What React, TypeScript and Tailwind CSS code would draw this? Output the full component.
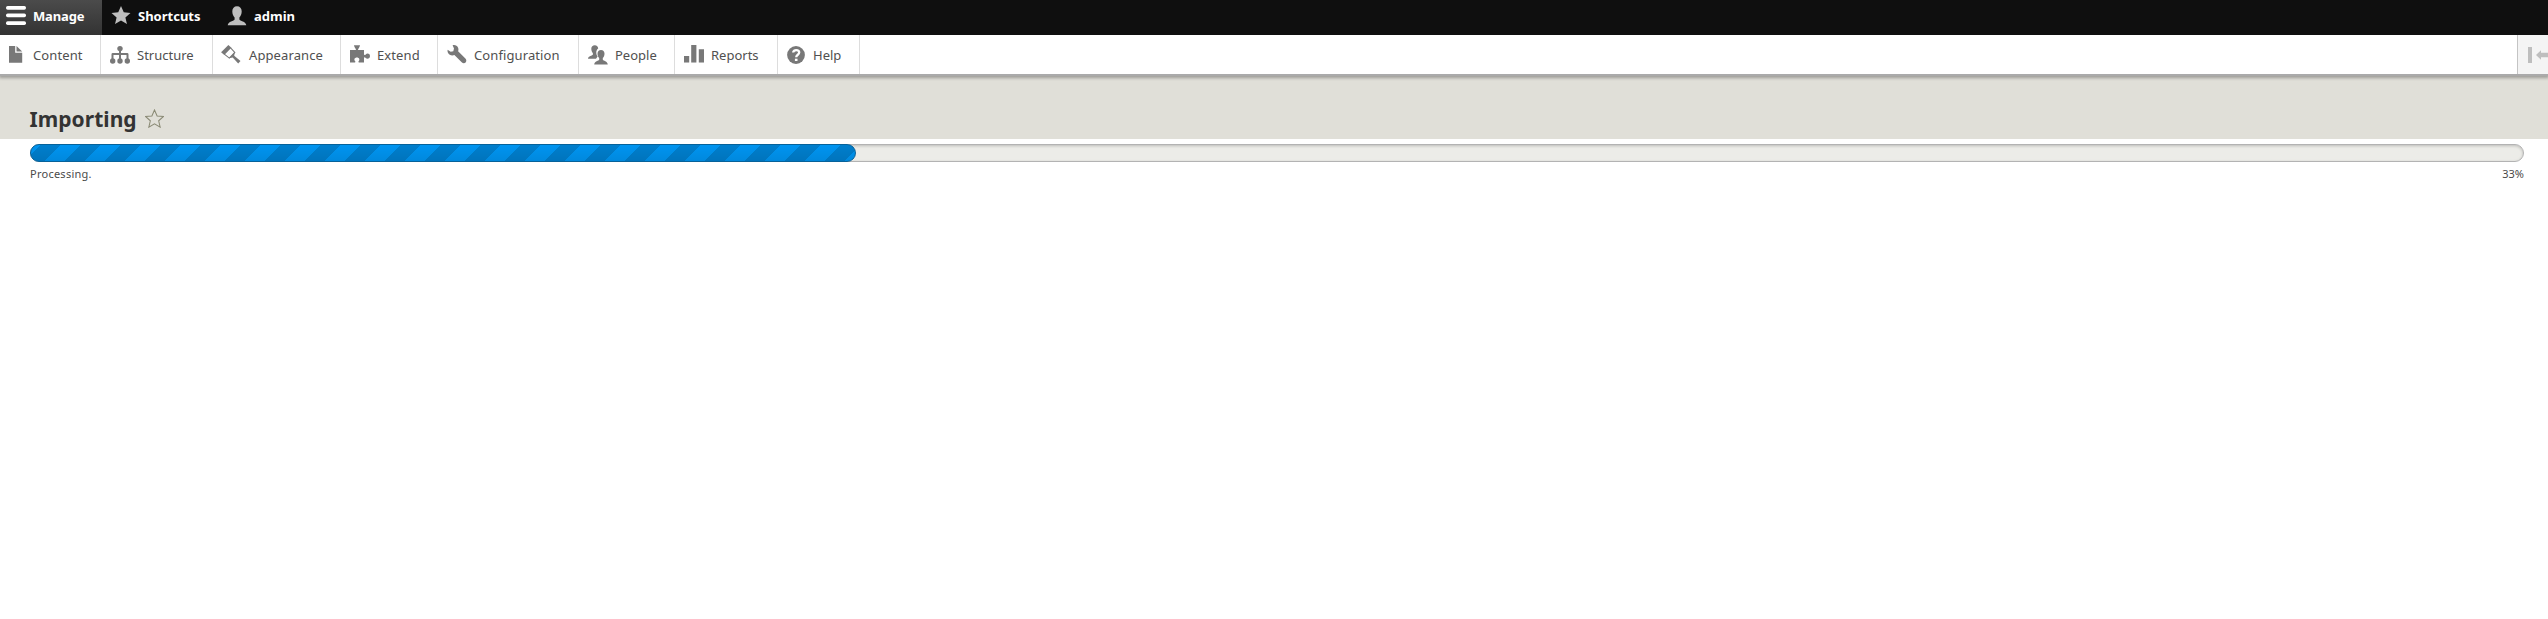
import type { ReactNode } from 'react';

const STAR = 'M10 1l2.75 6.3 6.75.6-5.1 4.5 1.55 6.7L10 15.6l-5.95 3.5 1.55-6.7L.5 7.9l6.75-.6z';
const PERSON =
  'M10 0.2c2.9 0 4.7 2 4.7 5 0 2.6-.9 5-2.3 6.2v2.2c.3 1.3 6.6 2 6.9 5.6H.7c.3-3.6 6.6-4.3 6.9-5.6v-2.2C6.2 10.2 5.300 7.8 5.300 5.200c0-3 1.800-5 4.700-5z';

function Icon({ children, className }: { children: ReactNode; className: string }) {
  return (
    <svg viewBox="0 0 20 20" fill="currentColor" className={`size-5 shrink-0 overflow-visible ${className}`}>
      {children}
    </svg>
  );
}

const icons: Record<string, ReactNode> = {
  Content: <path d="M3 1h6.200v6.800h7v10H3zM10.500 1l5.700 5.500h-5.700z" />,
  Structure: (
    <>
      <path d="M9 3h2v5h6.200q1.300 0 1.300 1.300V15h-2v-5H11v5H9v-5H3.500v5h-2V9.300Q1.500 8 2.800 8H9z" />
      <circle cx="10" cy="3.600" r="2.700" />
      <circle cx="2.700" cy="16" r="2.700" />
      <circle cx="10" cy="16" r="2.700" />
      <circle cx="17.300" cy="16" r="2.700" />
    </>
  ),
  Appearance: (
    <>
      <path d="M.1 7.200L7.400 0l3 2.800-7.100 7.100z" />
      <path d="M9.600 2.800l4.200 4.700-5.500 5.600-5-4" fill="none" stroke="currentColor" strokeWidth="1.100" />
      <path d="M13.800 7.200l-.6 3.500 6.300 5.400-2.300 2.500-5.500-6.200-3.600.9z" />
    </>
  ),
  Extend: (
    <path d="M0 5h5.400c.7 0 .7-1 0-1.600C4.500 2.600 4 .2 4 .2h6s-.5 2.400-1.400 3.200c-.7.600-.7 1.600 0 1.600H14v4.300c0 .8 1 .9 1.700.1C17 8 20 8.400 20 11.100s-3 3.200-4.300 1.800c-.7-.8-1.700-.7-1.700.100v4.600H9c-.7 0-.8-.8-.2-1.500 1.200-1.300.6-3.600-1.900-3.600s-3.100 2.300-1.900 3.600c.6.700.5 1.500-.2 1.500H0z" />
  ),
  Configuration: (
    <path d="M5.600.3c2.300-.7 4.600.300 5.500 2.400.5 1.200.4 2.400 0 3.500l7.300 7.400c1.200 1.200 1.200 2.900.2 3.900-1 1-2.700 1-3.900-.2L7.400 10c-1.500.7-3.200.6-4.700-.300C1 8.600.200 6.700.600 4.800l3.100 2 2.600-.6.700-2.600z" />
  ),
  People: (
    <>
      <path d="M6.800.2c2 0 3.400 1.300 3.400 3.300-1.400 1-2 2.500-1.900 4.500.1 1.400.6 2.700 1.300 3.600L8 13.700H0c.2-2.700 4.500-3 4.900-4.200V8.200C4 7.300 3.300 5.600 3.300 3.800c0-2.200 1.400-3.600 3.500-3.600z" />
      <path d="M13 5c2.200 0 3.500 1.500 3.500 3.700 0 1.900-.7 3.500-1.700 4.400v1.600c.3 1 4.800 1.500 5 4.900H6.200c.2-3.400 4.700-3.900 5-4.900v-1.600c-1-.9-1.700-2.500-1.700-4.400C9.500 6.500 10.800 5 13 5z" />
    </>
  ),
  Reports: (
    <>
      <path d="M0 11h5.200v6H0zM7.200 0h5.200v17H7.200zM14.800 4.300H20V17h-5.200z" />
      <path d="M0 17h5.200v.8H0zM7.200 17h5.200v.8H7.200zM14.800 17H20v.8h-5.200z" fillOpacity=".7" />
    </>
  ),
  Help: (
    <>
      <circle cx="9" cy="10" r="8.900" />
      <path d="M6.200 7.600c0-3.400 6-3.300 6 0 0 2.200-3 2.100-3 4.700" fill="none" stroke="#fff" strokeWidth="2.300" />
      <rect x="7.900" y="13.700" width="2.600" height="2.300" fill="#fff" />
    </>
  ),
};

const menu = [
  { label: 'Content', box: 'w-[101px] pl-1.5', gap: 'gap-[7px] tracking-[0.1px]' },
  { label: 'Structure', box: 'w-[112px] pl-[9px]', gap: 'gap-[7px]' },
  { label: 'Appearance', box: 'w-32 pl-2', gap: 'gap-2 tracking-[0.1px]' },
  { label: 'Extend', box: 'w-[97px] pl-[9px]', gap: 'gap-[7px] tracking-[0.1px]' },
  { label: 'Configuration', box: 'w-[141px] pl-[9px]', gap: 'gap-[7px] tracking-[0.1px]' },
  { label: 'People', box: 'w-24 pl-[9px]', gap: 'gap-[7px]' },
  { label: 'Reports', box: 'w-[103px] pl-[9px]', gap: 'gap-[7px]' },
  { label: 'Help', box: 'w-[82px] pl-[9px]', gap: 'gap-1.5' },
];

function Toolbar() {
  return (
    <nav className="flex h-[35px] items-start bg-[#0f0f0f] text-[13px] leading-8 font-bold text-white">
      <a className="flex h-full w-[102px] items-start gap-[7px] bg-linear-to-b from-[#4b4b4b] to-[#333] pl-1.5 tracking-[-0.15px]">
        <Icon className="mt-[5px] text-white">
          <rect y="1" width="20" height="3.700" rx="1.700" />
          <rect y="8.600" width="20" height="3.700" rx="1.700" />
          <rect y="16.200" width="20" height="3.700" rx="1.700" />
        </Icon>
        Manage
      </a>
      <a className="flex w-[117px] items-start gap-[7px] pl-[9px]">
        <Icon className="mt-[5px] text-[#bebebe]">
          <path d={STAR} />
        </Icon>
        Shortcuts
      </a>
      <a className="flex items-start gap-[7px] pl-2">
        <Icon className="mt-1.5 text-[#bebebe]">
          <path d={PERSON} />
        </Icon>
        admin
      </a>
    </nav>
  );
}

function Tray() {
  return (
    <nav className="relative flex h-[39px] bg-white text-[13px] leading-10 text-[#505050] shadow-[0_2px_0_0_#aaa,0_3px_3px_1px_rgba(0,0,0,0.3)] [clip-path:inset(0_0_-10px_0)]">
      {menu.map(({ label, box, gap }) => (
        <a key={label} className={`flex shrink-0 border-r border-[#ddd] ${box} ${gap}`}>
          <Icon className="mt-2.5 text-[#787878]">{icons[label]}</Icon>
          {label}
        </a>
      ))}
      <button className="ml-auto flex w-[31px] items-center overflow-hidden border-l border-[#c4c4c4] bg-[#f4f4f4] pl-2.5">
        <Icon className="mt-px text-[#bebebe]">
          <path d="M0 2h4v16H0zM8 10l5-4.800v2.500h7v4.600h-7v2.500z" />
        </Icon>
      </button>
    </nav>
  );
}

function Progress() {
  return (
    <div className="pt-[5px] pr-6 pl-[30px] text-[11px] text-[#4a4a4a]">
      <div className="h-[18px] rounded-full border border-[#b3b3b3] bg-[#ecece8] shadow-[inset_0_1px_3px_rgba(0,0,0,0.2)]">
        <div className="-mt-px -ml-px h-[18px] w-[826px] rounded-full border border-[#07629a] bg-[linear-gradient(to_bottom,transparent,rgba(0,0,0,0.08)),repeating-linear-gradient(135deg,#0094f0_0,#0094f0_6.4px,#007ecc_6.4px,#007ecc_20.54px,#0094f0_20.54px,#0094f0_28.284px)]" />
      </div>
      <div className="flex justify-between leading-6">
        <span className="tracking-[0.25px]">Processing.</span>
        <span>33%</span>
      </div>
    </div>
  );
}

export default function App() {
  return (
    <div className="min-h-[619px] bg-white font-['Noto_Sans',sans-serif]">
      <Toolbar />
      <Tray />
      <header className="flex h-[65px] items-end bg-[#e0dfd8] pl-[29.5px] text-[#333]">
        <h1 className="text-[21px] leading-10 font-bold tracking-[0.05px]">Importing</h1>
        <svg viewBox="0 0 20 20" className="mb-[11px] ml-2 size-[19px]" fill="none" stroke="#8a8a75" strokeWidth="1.100">
          <path d={STAR} />
        </svg>
      </header>
      <Progress />
    </div>
  );
}
